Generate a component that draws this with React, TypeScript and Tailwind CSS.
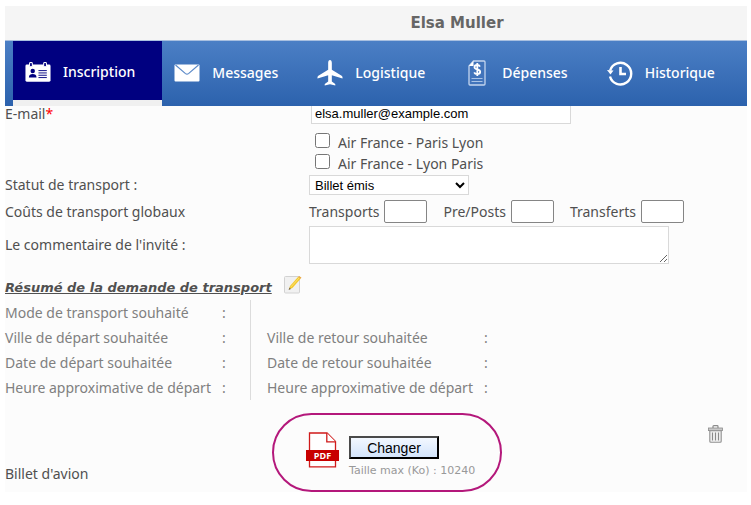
import type { ReactNode } from "react";

function BadgeIcon() {
  return (
    <svg width="28" height="22" viewBox="0 0 28 22" aria-hidden="true">
      <rect x="0.5" y="3" width="27" height="18.5" rx="1.5" fill="#fff" />
      <rect x="4.9" y="0.8" width="3" height="4.6" rx="1" fill="#000080" stroke="#fff" strokeWidth="1.1" />
      <rect x="20.1" y="0.8" width="3" height="4.6" rx="1" fill="#000080" stroke="#fff" strokeWidth="1.1" />
      <circle cx="8.3" cy="10" r="2.4" fill="#000080" />
      <path d="M4.2 16.8c0-2.8 1.8-3.6 4.1-3.6s4.1.8 4.1 3.6z" fill="#000080" />
      <path d="M14.5 9.5h9M14.5 12h9M14.5 14.5h9M14.5 17h9" stroke="#000080" strokeWidth="1" />
    </svg>
  );
}

function MailIcon() {
  return (
    <svg width="26" height="18" viewBox="0 0 26 18" aria-hidden="true">
      <rect x="0.5" y="0.5" width="25" height="17" rx="1" fill="#fff" />
      <path d="M1.5 1l10 8.6q1.5 1.2 3 0L24.5 1" fill="none" stroke="#5c8ac8" strokeWidth="1.2" />
    </svg>
  );
}

function PlaneIcon() {
  return (
    <svg width="27" height="28" viewBox="0 0 27 28" aria-hidden="true">
      <path
        fill="#fff"
        d="M13.5.5c1.100 0 1.900 1.300 1.900 3v7l10.200 6.300c.6.400.9.900.9 1.500v1.500l-11.100-3.500v6.500l3.200 2.300c.3.200.4.500.4.900v1l-5.500-1.400L8 27v-1c0-.4.1-.7.4-.9l3.200-2.300v-6.500L.5 19.800v-1.500c0-.6.3-1.100.9-1.500l10.200-6.300v-7c0-1.700.8-3 1.900-3z"
      />
    </svg>
  );
}

function ExpenseIcon() {
  return (
    <svg width="18" height="26" viewBox="0 0 18 26" aria-hidden="true">
      <path d="M5.5 1H16a1 1 0 0 1 1 1v22a1 1 0 0 1-1 1H2a1 1 0 0 1-1-1V6z" fill="#4274bb" stroke="#c3d5ee" strokeWidth="1.3" />
      <path d="M5.5 1v5H1z" fill="#fff" />
      <path d="M3.5 18.5h11M3.5 21.5h11" stroke="#a9c3e6" strokeWidth="1" />
      <path
        d="M12 6.6C11.5 5.5 10.5 5 9.2 5 7.6 5 6.5 5.9 6.5 7.2c0 3 5.7 1.4 5.7 4.6 0 1.4-1.2 2.3-2.9 2.3-1.5 0-2.6-.6-3.1-1.800M9.300 3v13"
        fill="none"
        stroke="#fff"
        strokeWidth="1.8"
      />
    </svg>
  );
}

function HistoryIcon() {
  return (
    <svg width="26" height="26" viewBox="0 0 26 26" aria-hidden="true">
      <path d="M3.1 10.5A10.8 10.8 0 1 1 3 16.5" fill="none" stroke="#fff" strokeWidth="2.4" />
      <path d="M0 10l6.5.5-3 4z" fill="#fff" />
      <path d="M13.5 7v7h5.5" fill="none" stroke="#fff" strokeWidth="2.6" />
    </svg>
  );
}

function EditIcon() {
  return (
    <svg width="18" height="19" viewBox="0 0 18 19" aria-hidden="true">
      <rect x="0.5" y="1.5" width="15" height="16.5" rx="1" fill="#f1f1f1" stroke="#d2d2d2" />
      <path d="M5 14.5l1-3.600L14.200 1.800l2.400 2L8.400 13z" fill="#f3c92b" />
      <path d="M6.900 11.900l8.500-9.200" stroke="#fbe27a" strokeWidth="1" />
      <path d="M14.200 1.800l1-.9 2.300 1.900-.9 1z" fill="#e9a23b" />
      <path d="M4.600 15l.8-2.400 1.600 1.400z" fill="#7a6a4c" />
    </svg>
  );
}

function PdfIcon() {
  return (
    <svg width="33" height="36" viewBox="0 0 33 36" role="img" aria-label="PDF">
      <path d="M3.5 1h17.5l8.5 8.5V34.8H3.5z" fill="#fff" stroke="#cf1a1a" strokeWidth="1.3" />
      <path d="M20.8 1v8.8h8.7" fill="#fff" stroke="#cf1a1a" strokeWidth="1.3" />
      <rect x="0" y="18" width="33" height="11" fill="#c80000" />
      <text x="16.5" y="26.5" textAnchor="middle" fontFamily="Open Sans, sans-serif" fontWeight="700" fontSize="9" fill="#fff">
        PDF
      </text>
    </svg>
  );
}

function TrashIcon() {
  return (
    <svg width="15" height="18" viewBox="0 0 15 18" aria-hidden="true">
      <path d="M5 3V1.500q0-.8.800-.8h3.400q.8 0 .8.800V3" fill="none" stroke="#8c8c8c" strokeWidth="1.2" />
      <rect x="0.5" y="3" width="14" height="2.6" fill="#c9c9c9" stroke="#8c8c8c" strokeWidth="0.8" />
      <path d="M1.8 5.8h11.4v10.4q0 1-1 1H2.8q-1 0-1-1z" fill="#f0f0f0" stroke="#909090" strokeWidth="1.1" />
      <path d="M4.5 7.5v8M7.5 7.5v8M10.5 7.5v8" stroke="#8a8a8a" strokeWidth="1.1" />
    </svg>
  );
}

const tabs: { label: string; icon: ReactNode }[] = [
  { label: "Inscription", icon: <BadgeIcon /> },
  { label: "Messages", icon: <MailIcon /> },
  { label: "Logistique", icon: <PlaneIcon /> },
  { label: "Dépenses", icon: <ExpenseIcon /> },
  { label: "Historique", icon: <HistoryIcon /> },
];

const flights = ["Air France - Paris Lyon", "Air France - Lyon Paris"];

const costs = ["Transports", "Pre/Posts", "Transferts"];

const departure = [
  "Mode de transport souhaité",
  "Ville de départ souhaitée",
  "Date de départ souhaitée",
  "Heure approximative de départ",
];

const arrival = ["Ville de retour souhaitée", "Date de retour souhaitée", "Heure approximative de départ"];

function Wishes({ items }: { items: string[] }) {
  return (
    <ul>
      {items.map((item) => (
        <li key={item} className="flex h-[25px] items-center">
          <span className="w-[217px] whitespace-nowrap">{item}</span>
          <span>:</span>
        </li>
      ))}
    </ul>
  );
}

export default function App() {
  return (
    <div className="bg-white pt-1.5 pr-1 pl-[5px] font-['Noto_Sans',Verdana,sans-serif] text-sm leading-5 text-[#505050]">
      <header className="flex h-[34px] items-center justify-center bg-[#f5f5f5] pl-[162px]">
        <h1 className="font-['DejaVu_Sans',Verdana,sans-serif] text-[15px] font-bold text-[#666]">Elsa Muller</h1>
      </header>

      <nav className="flex h-[66px] border-t border-[#a9c0e0] bg-linear-to-b from-[#4b7fc5] to-[#2c62ad] pl-2">
        {tabs.map((tab, i) => (
          <a
            key={tab.label}
            href="#"
            aria-current={i === 0 ? "page" : undefined}
            className={
              "flex items-center gap-3 pr-[27px] pb-0.5 pl-3 font-medium text-white " +
              (i === 0 ? "border-b-6 border-[#f0f0f0] bg-[#000080] pt-1" : "")
            }
          >
            <span className="flex w-[26px] shrink-0 justify-center">{tab.icon}</span>
            {tab.label}
          </a>
        ))}
      </nav>

      <main className="bg-[#fcfcfc]">
        <form onSubmit={(e) => e.preventDefault()}>
          <div className="grid grid-cols-[304px_1fr]">
            <label htmlFor="email" className="-mt-0.5">
              E-mail<span className="text-[#f00]">*</span>
            </label>
            <div className="pl-0.5">
              <input
                id="email"
                type="email"
                defaultValue="elsa.muller@example.com"
                className="block h-[18px] w-[260px] border border-t-0 border-[#d9d9d9] bg-white px-[3px] pb-0.5 font-['Liberation_Sans',Arial,sans-serif] text-[13px] text-black"
              />
            </div>

            <div className="col-start-2 pt-2 pb-px">
              {flights.map((flight) => (
                <label key={flight} className="flex h-[21px] items-center gap-2 pl-1.5">
                  <input type="checkbox" className="mb-1 size-[15px]" />
                  {flight}
                </label>
              ))}
            </div>

            <label htmlFor="status">Statut de transport :</label>
            <div>
              <select
                id="status"
                className="block h-5 w-40 border border-[#d9d9d9] bg-white pl-px font-['Liberation_Sans',Arial,sans-serif] text-[13px] text-black"
              >
                <option>Billet émis</option>
              </select>
            </div>

            <span className="pt-[7px]">Coûts de transport globaux</span>
            <div className="flex gap-4 pt-[5px]">
              {costs.map((cost) => (
                <label key={cost} className="flex items-center gap-[5px]">
                  {cost}
                  <input type="text" className="h-[23px] w-[43px] rounded-xs border border-[#858585] bg-white px-1" />
                </label>
              ))}
            </div>

            <label htmlFor="comment" className="pt-3">
              Le commentaire de l'invité :
            </label>
            <div className="pt-[3px]">
              <textarea id="comment" className="block h-[38px] w-[360px] border border-[#d9d9d9] bg-white p-0.5" />
            </div>
          </div>

          <div className="flex h-9 items-center gap-3 pt-3">
            <h2 className="font-['DejaVu_Sans',Verdana,sans-serif] text-[13px] font-bold italic underline">
              Résumé de la demande de transport
            </h2>
            <button type="button" aria-label="Modifier la demande de transport" className="mb-2">
              <EditIcon />
            </button>
          </div>

          <div className="flex text-[#808080]">
            <div className="w-[246px] border-r border-[#dcdcdc]">
              <Wishes items={departure} />
            </div>
            <div className="pt-[25px] pl-4">
              <Wishes items={arrival} />
            </div>
          </div>

          <div className="flex pt-[13px]">
            <label htmlFor="ticket" className="w-[267px] self-end pb-2">
              Billet d'avion
            </label>
            <div className="flex h-[79px] w-[230px] gap-2.5 rounded-[40px] border-2 border-[#b4187b] pt-[17px] pl-8">
              <PdfIcon />
              <div className="pt-1">
                <button
                  id="ticket"
                  type="button"
                  className="block h-[23px] w-[90px] border-2 border-t-[#4a4a4a] border-r-black border-b-black border-l-[#4a4a4a] bg-linear-to-b from-[#f3f8ff] to-[#d3e4fb] font-['Liberation_Sans',Arial,sans-serif] text-sm leading-4 text-black"
                >
                  Changer
                </button>
                <p className="pt-0.5 font-['DejaVu_Sans',Verdana,sans-serif] text-[11px] whitespace-nowrap text-[#999]">
                  Taille max (Ko) : 10240
                </p>
              </div>
            </div>
            <button type="button" aria-label="Supprimer" className="mt-3 mr-6 ml-auto self-start">
              <TrashIcon />
            </button>
          </div>
        </form>
      </main>
    </div>
  );
}
